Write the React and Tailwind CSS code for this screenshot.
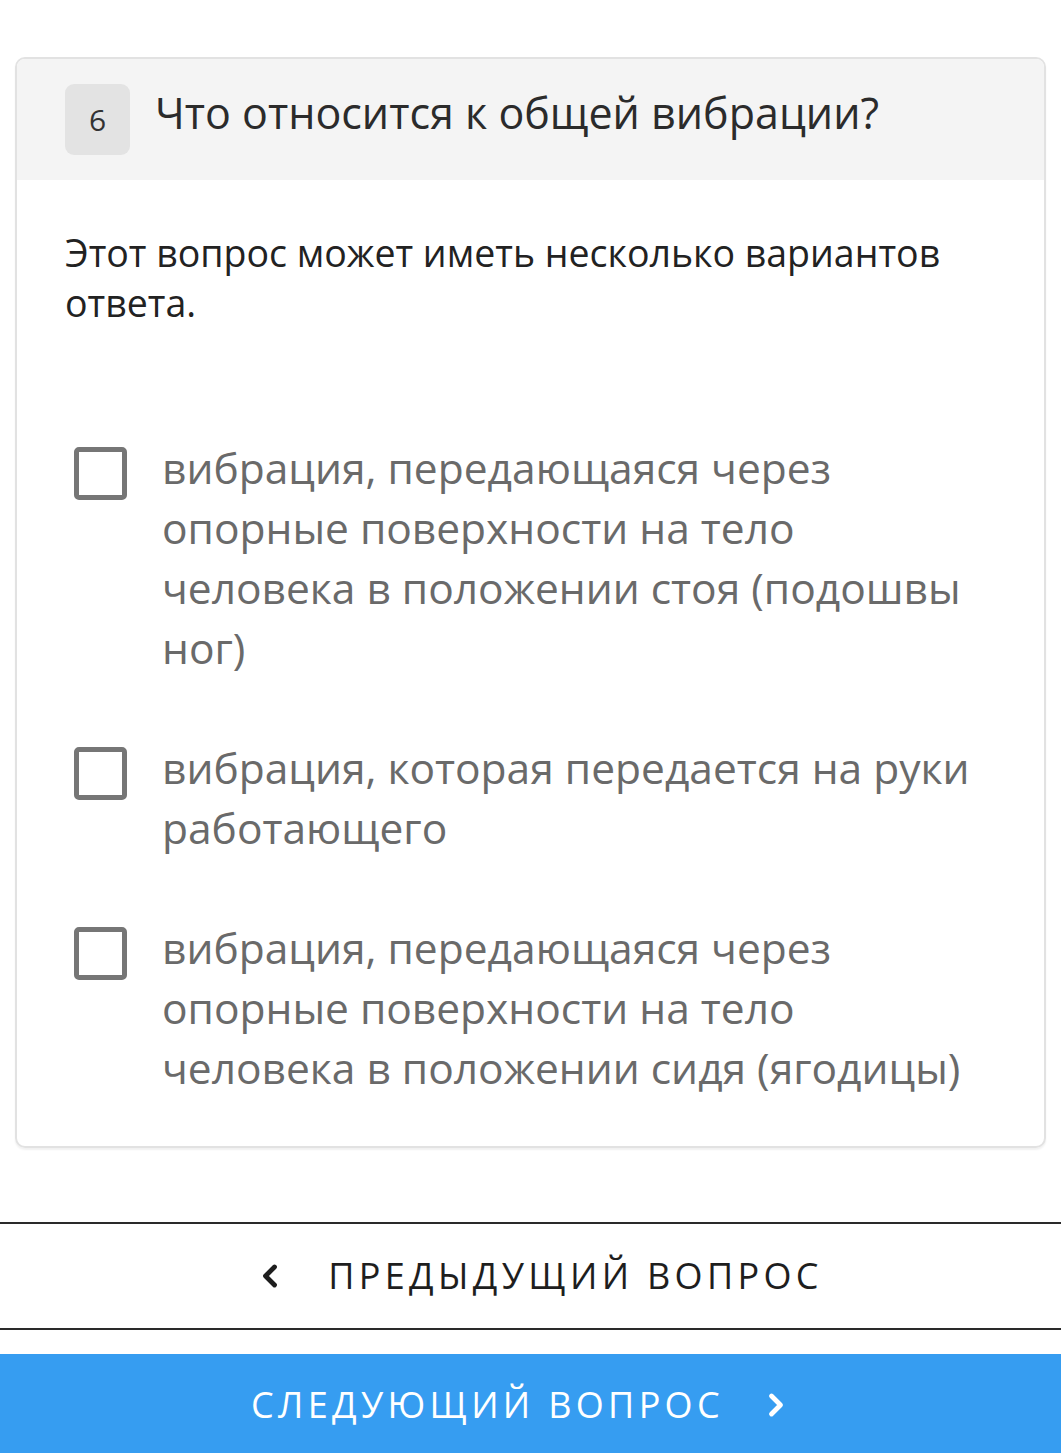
import { ChevronLeft, ChevronRight } from "lucide-react";

const options = [
  "вибрация, передающаяся через опорные поверхности на тело человека в положении стоя (подошвы ног)",
  "вибрация, которая передается на руки работающего",
  "вибрация, передающаяся через опорные поверхности на тело человека в положении сидя (ягодицы)",
];

function Option({ text }) {
  return (
    <label className="flex items-start gap-[35px] pl-[9px]">
      <span className="mt-[9px] h-[53px] w-[53px] shrink-0 rounded-[5px] border-[5px] border-[#767676] bg-white" />
      <span className="w-[830px] text-[42.5px] leading-[60px] text-[#6a6a6a]">{text}</span>
    </label>
  );
}

export default function App() {
  return (
    <div
      className="min-h-[1453px] bg-white pt-[57px]"
      style={{ fontFamily: '"Open Sans", "Noto Sans", sans-serif' }}
    >
      <div className="mx-[15px] overflow-hidden rounded-[10px] border-2 border-[#e2e2e2] shadow-[0_2px_2px_rgba(0,0,0,0.06)]">
        <div className="flex h-[121px] items-start gap-[25px] bg-[#f4f4f4] px-[48px] pt-[25px]">
          <div className="flex h-[71px] w-[65px] items-center justify-center rounded-[9px] bg-[#e3e3e3] text-[30px] text-[#333]">
            6
          </div>
          <h2 className="-mt-[1px] text-[43px] leading-[60px] text-[#2b2b2b]">Что относится к общей вибрации?</h2>
        </div>

        <div className="px-[48px] pb-[48px] pt-[48px]">
          <p className="w-[900px] text-[37.5px] leading-[50px] text-[#222]">
            Этот вопрос может иметь несколько вариантов ответа.
          </p>

          <div className="mt-[110px] flex flex-col gap-[60px]">
            {options.map((o, i) => (
              <Option key={i} text={o} />
            ))}
          </div>
        </div>
      </div>

      {/* nav buttons */}
      <button className="mt-[74px] flex h-[108px] w-full items-center justify-center gap-[40px] border-y-2 border-[#2a2a2a] bg-white pl-[14px] text-[36px] tracking-[0.12em] text-[#1e1e1e]">
        <ChevronLeft className="h-[36px] w-[36px]" strokeWidth={3.2} />
        <span>ПРЕДЫДУЩИЙ ВОПРОС</span>
      </button>

      <button className="mt-[24px] flex h-[101px] w-full items-center justify-center gap-[34px] bg-[#369df1] pr-[16px] text-[36px] tracking-[0.12em] text-white">
        <span>СЛЕДУЮЩИЙ ВОПРОС</span>
        <ChevronRight className="h-[36px] w-[36px]" strokeWidth={3.2} />
      </button>
    </div>
  );
}
